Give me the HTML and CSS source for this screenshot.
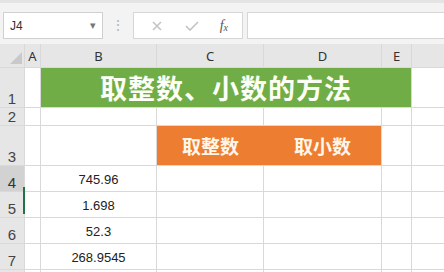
FILE: index.html
```html
<!DOCTYPE html>
<html>
<head>
<meta charset="utf-8">
<link rel="stylesheet" href="styles.css">
</head>
<body>
<div class="toolbar">
  <div class="namebox"><span class="ref">J4</span><span class="caret">▾</span></div>
  <div class="dots">⋮</div>
  <div class="fbtns">
    <svg class="ico" width="14" height="14" viewBox="0 0 14 14"><path d="M3 3 L11 11 M11 3 L3 11" stroke="#c4c4c4" stroke-width="1.6" fill="none"/></svg>
    <svg class="ico" width="16" height="14" viewBox="0 0 16 14"><path d="M2 7 L6 11 L14 3" stroke="#c4c4c4" stroke-width="1.6" fill="none"/></svg>
    <span class="fx">f<sub>x</sub></span>
  </div>
  <div class="finput"></div>
</div>
<div class="sheet">
  <div class="corner"><svg width="12" height="12" viewBox="0 0 12 12"><path d="M12 0 L12 12 L0 12 Z" fill="#c9c9c9"/></svg></div>
  <div class="ch">A</div><div class="ch">B</div><div class="ch">C</div><div class="ch">D</div><div class="ch">E</div><div class="ch"></div>

  <div class="rh">1</div><div class="c"></div>
  <div class="title">取整数、小数的方法</div>
  <div class="c"></div>

  <div class="rh">2</div><div class="c"></div><div class="c"></div><div class="c"></div><div class="c"></div><div class="c"></div><div class="c"></div>

  <div class="rh">3</div><div class="c"></div><div class="c"></div>
  <div class="hdrs"><div class="hdr">取整数</div><div class="hdr">取小数</div></div>
  <div class="c"></div><div class="c"></div>

  <div class="rh sel">4</div><div class="c"></div><div class="c num">745.96</div><div class="c"></div><div class="c"></div><div class="c"></div><div class="c"></div>
  <div class="rh">5</div><div class="c"></div><div class="c num">1.698</div><div class="c"></div><div class="c"></div><div class="c"></div><div class="c"></div>
  <div class="rh">6</div><div class="c"></div><div class="c num">52.3</div><div class="c"></div><div class="c"></div><div class="c"></div><div class="c"></div>
  <div class="rh">7</div><div class="c"></div><div class="c num">268.9545</div><div class="c"></div><div class="c"></div><div class="c"></div><div class="c"></div>
  <div class="rh"></div><div class="c"></div><div class="c"></div><div class="c"></div><div class="c"></div><div class="c"></div><div class="c"></div>
  <div class="marker"></div>
</div>
</body>
</html>
```

FILE: styles.css
```css
html, body {
  margin: 0;
  padding: 0;
  width: 444px;
  height: 272px;
  overflow: hidden;
  background: #ffffff;
  font-family: "Liberation Sans", "Noto Sans CJK SC", sans-serif;
}
.toolbar {
  height: 44px;
  box-sizing: border-box;
  background: #f3f3f3;
  border-top: 3px solid #e4e4e4;
  padding-top: 9px;
  display: flex;
  align-items: flex-start;
}
.namebox {
  margin-left: 3px;
  width: 100px;
  height: 27px;
  box-sizing: border-box;
  background: #fff;
  border: 1px solid #d0d0d0;
  display: flex;
  align-items: center;
  justify-content: space-between;
  padding: 0 6px 0 6px;
  font-size: 12px;
  color: #333;
}
.caret {
  font-size: 11px;
  color: #777;
}
.dots {
  width: 30px;
  text-align: center;
  color: #b5b5b5;
  font-size: 14px;
  line-height: 27px;
}
.fbtns {
  width: 110px;
  height: 27px;
  box-sizing: border-box;
  background: #fff;
  border: 1px solid #d6d6d6;
  display: flex;
  align-items: center;
  justify-content: space-around;
  padding: 0 4px 0 6px;
}
.fx {
  font-family: "Liberation Serif", serif;
  font-style: italic;
  font-size: 14px;
  color: #555;
}
.fx sub {
  font-size: 10px;
  vertical-align: -1px;
}
.finput {
  margin-left: 4px;
  flex: 1;
  height: 27px;
  box-sizing: border-box;
  background: #fff;
  border: 1px solid #d6d6d6;
  border-right: none;
}
.sheet {
  position: relative;
  display: grid;
  grid-template-columns: 24px 15px 115px 106px 117px 29px 1fr;
  grid-template-rows: 23px 39px 17px 39px 25px 25px 25px 25px 10px;
  gap: 1px;
  background: #d9d9d9;
}
.corner {
  background: #e6e6e6;
  display: flex;
  align-items: flex-end;
  justify-content: flex-end;
  padding: 0 2px 3px 0;
}
.ch {
  background: #e6e6e6;
  color: #333;
  font-family: "Noto Sans", sans-serif;
  font-size: 13px;
  display: flex;
  align-items: center;
  justify-content: center;
}
.rh {
  background: #e6e6e6;
  color: #444;
  font-family: "Liberation Sans", sans-serif;
  font-size: 15px;
  display: flex;
  align-items: flex-end;
  justify-content: center;
  line-height: 15px;
  padding-bottom: 1px;
  overflow: hidden;
}
.rh.sel {
  background: #d2d2d2;
  color: #333;
}
.c {
  background: #fff;
}
.num {
  display: flex;
  align-items: center;
  justify-content: center;
  font-size: 13px;
  color: #222;
  padding-top: 2px;
}
.title {
  grid-column: span 4;
  background: #70ad47;
  color: #fbfff5;
  font-family: "Noto Sans CJK SC", sans-serif;
  font-weight: 700;
  font-size: 27px;
  display: flex;
  align-items: center;
  justify-content: center;
  letter-spacing: 1px;
}
.hdrs {
  grid-column: span 2;
  background: #ed7d31;
  display: grid;
  grid-template-columns: 107px 117px;
}
.hdr {
  color: #fff6ea;
  font-family: "Noto Sans CJK SC", sans-serif;
  font-weight: 700;
  font-size: 19px;
  display: flex;
  align-items: center;
  justify-content: center;
}
.marker {
  position: absolute;
  left: 23px;
  top: 143px;
  width: 2px;
  height: 27px;
  background: #217346;
}
```
